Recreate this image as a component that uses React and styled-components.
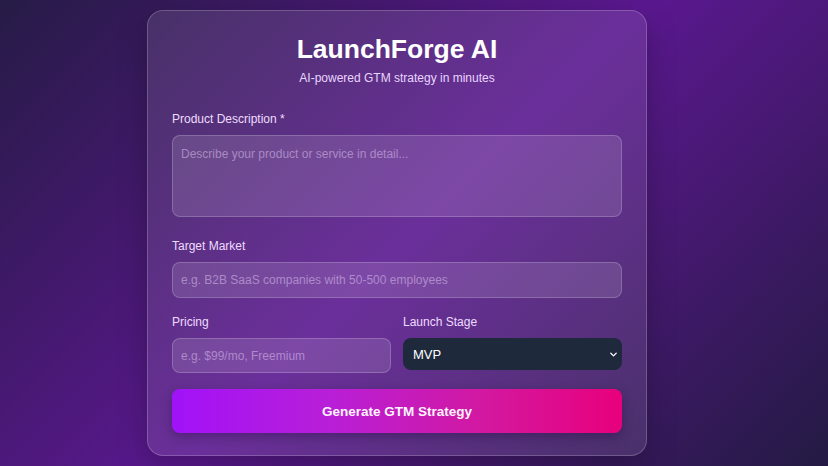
import React from "react";
import styled, { createGlobalStyle } from "styled-components";
import { ChevronDown } from "lucide-react";

const GlobalStyle = createGlobalStyle`
  html, body {
    margin: 0;
    padding: 0;
    height: 100%;
  }
  body {
    font-family: "Liberation Sans", Arial, sans-serif;
    background: #2a1d4c;
  }
  * { box-sizing: border-box; }
`;

const Page = styled.div`
  min-height: 466px;
  padding: 10px 0 10px 147px;
  background: linear-gradient(135deg, #261b46 0%, #44196e 28%, #5b1890 50%, #44196e 72%, #231a43 100%);
`;

const Card = styled.div`
  width: 500px;
  height: 446px;
  padding: 21px 24px 23px;
  border-radius: 16px;
  background: rgba(255, 255, 255, 0.1);
  border: 1px solid rgba(255, 255, 255, 0.2);
  box-shadow: 0 10px 30px rgba(0, 0, 0, 0.25);
  display: flex;
  flex-direction: column;
`;

const Header = styled.div`
  text-align: center;
  margin-bottom: 25px;
`;

const Title = styled.h1`
  margin: 0;
  font-size: 26.5px;
  line-height: 34px;
  font-weight: 700;
  color: #ffffff;
`;

const Subtitle = styled.p`
  margin: 4px 0 0;
  font-size: 12px;
  line-height: 16px;
  color: #e9d5ff;
`;

const Form = styled.div`
  display: flex;
  flex-direction: column;
  gap: 16px;
`;

const Row = styled.div`
  display: grid;
  grid-template-columns: 1fr 1fr;
  gap: 12px;
  align-items: start;
`;

const Field = styled.div`
  display: flex;
  flex-direction: column;
`;

const Label = styled.label`
  font-size: 12px;
  line-height: 16px;
  color: #eedcff;
  margin-bottom: 8px;
`;

const fieldBase = `
  width: 100%;
  font-family: "Liberation Sans", Arial, sans-serif;
  font-size: 12px;
  color: #ffffff;
  background: rgba(255, 255, 255, 0.12);
  border: 1px solid rgba(255, 255, 255, 0.2);
  border-radius: 8px;
  outline: none;
  &::placeholder {
    color: rgba(226, 205, 245, 0.5);
  }
`;

const TextArea = styled.textarea`
  ${fieldBase}
  display: block;
  height: 82px;
  margin-bottom: 5px;
  padding: 10px 8px;
  resize: none;
  line-height: 16px;
`;

const Input = styled.input`
  ${fieldBase}
  height: ${(p) => p.$h || 36}px;
  padding: 0 8px;
`;

const SelectWrap = styled.div`
  position: relative;
`;

const Select = styled.select`
  width: 100%;
  height: 32px;
  appearance: none;
  border: none;
  border-radius: 8px;
  background: #1e293b;
  color: #ffffff;
  font-family: "Liberation Sans", Arial, sans-serif;
  font-size: 13px;
  padding: 0 10px;
  outline: none;
`;

const Chevron = styled(ChevronDown)`
  position: absolute;
  right: 3px;
  top: 11px;
  color: #ffffff;
  pointer-events: none;
`;

const Button = styled.button`
  height: 44px;
  border: none;
  border-radius: 8px;
  background: linear-gradient(90deg, #a112f8 0%, #b81fd8 35%, #d3189f 70%, #e8007c 100%);
  color: #fff4fc;
  font-family: "Liberation Sans", Arial, sans-serif;
  font-size: 13.5px;
  font-weight: 700;
  box-shadow: 0 4px 12px rgba(20, 0, 40, 0.3);
  cursor: pointer;
`;

export default function App() {
  return (
    <>
      <GlobalStyle />
      <Page>
        <Card>
          <Header>
            <Title>LaunchForge AI</Title>
            <Subtitle>AI-powered GTM strategy in minutes</Subtitle>
          </Header>
          <Form>
            <Field>
              <Label>Product Description *</Label>
              <TextArea placeholder="Describe your product or service in detail..." />
            </Field>
            <Field>
              <Label>Target Market</Label>
              <Input placeholder="e.g. B2B SaaS companies with 50-500 employees" />
            </Field>
            <Row>
              <Field>
                <Label>Pricing</Label>
                <Input $h={35} placeholder="e.g. $99/mo, Freemium" />
              </Field>
              <Field>
                <Label>Launch Stage</Label>
                <SelectWrap>
                  <Select defaultValue="MVP">
                    <option>Idea</option>
                    <option>MVP</option>
                    <option>Beta</option>
                    <option>Launched</option>
                  </Select>
                  <Chevron size={11} strokeWidth={3} />
                </SelectWrap>
              </Field>
            </Row>
            <Button>Generate GTM Strategy</Button>
          </Form>
        </Card>
      </Page>
    </>
  );
}
